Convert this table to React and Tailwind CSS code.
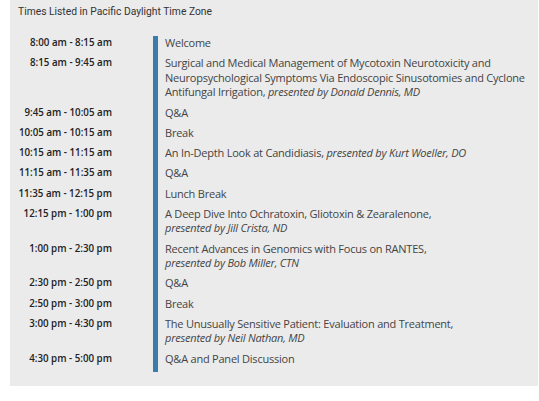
import React from "react";

const sessions = [
  { time: "8:00 am - 8:15 am", title: "Welcome" },
  {
    time: "8:15 am - 9:45 am",
    title:
      "Surgical and Medical Management of Mycotoxin Neurotoxicity and Neuropsychological Symptoms Via Endoscopic Sinusotomies and Cyclone Antifungal Irrigation",
    by: "Donald Dennis, MD",
  },
  { time: "9:45 am - 10:05 am", title: "Q&A" },
  { time: "10:05 am - 10:15 am", title: "Break" },
  { time: "10:15 am - 11:15 am", title: "An In-Depth Look at Candidiasis", by: "Kurt Woeller, DO" },
  { time: "11:15 am - 11:35 am", title: "Q&A" },
  { time: "11:35 am - 12:15 pm", title: "Lunch Break" },
  {
    time: "12:15 pm - 1:00 pm",
    title: "A Deep Dive Into Ochratoxin, Gliotoxin & Zearalenone",
    by: "Jill Crista, ND",
    br: true,
  },
  {
    time: "1:00 pm - 2:30 pm",
    title: "Recent Advances in Genomics with Focus on RANTES",
    by: "Bob Miller, CTN",
    br: true,
  },
  { time: "2:30 pm - 2:50 pm", title: "Q&A" },
  { time: "2:50 pm - 3:00 pm", title: "Break" },
  {
    time: "3:00 pm - 4:30 pm",
    title: "The Unusually Sensitive Patient: Evaluation and Treatment",
    by: "Neil Nathan, MD",
    br: true,
  },
  { time: "4:30 pm - 5:00 pm", title: "Q&A and Panel Discussion" },
];

export default function App() {
  return (
    <div className="min-h-[401px] bg-white">
      <div className="ml-[10px] w-[528px] bg-[#ebebeb] pt-[5px] pb-[14px]">
        {/* Header */}
        <p className="pl-2 text-[10.3px] leading-[14px] text-[#333] font-['Roboto',sans-serif]">
          Times Listed in Pacific Daylight Time Zone
        </p>

        {/* Agenda */}
        <div className="mt-[17px] grid grid-cols-[143px_1fr] font-['Open_Sans',sans-serif] text-[11px] leading-[14.5px] tracking-[-0.22px]">
          {sessions.map((s, i) => (
            <React.Fragment key={i}>
              <div className="pr-[41px] pb-[5.75px] text-right text-[9.75px] font-semibold tracking-normal text-[#222]">
                {s.time}
              </div>
              <div className="border-l-[5px] border-[#3a7caa] pl-[7px] pr-[4px] pb-[5.75px] text-[#444]">
                {s.title}
                {s.by && (
                  <>
                    ,{s.br ? <br /> : " "}
                    <em>presented by {s.by}</em>
                  </>
                )}
              </div>
            </React.Fragment>
          ))}
        </div>
      </div>
    </div>
  );
}
